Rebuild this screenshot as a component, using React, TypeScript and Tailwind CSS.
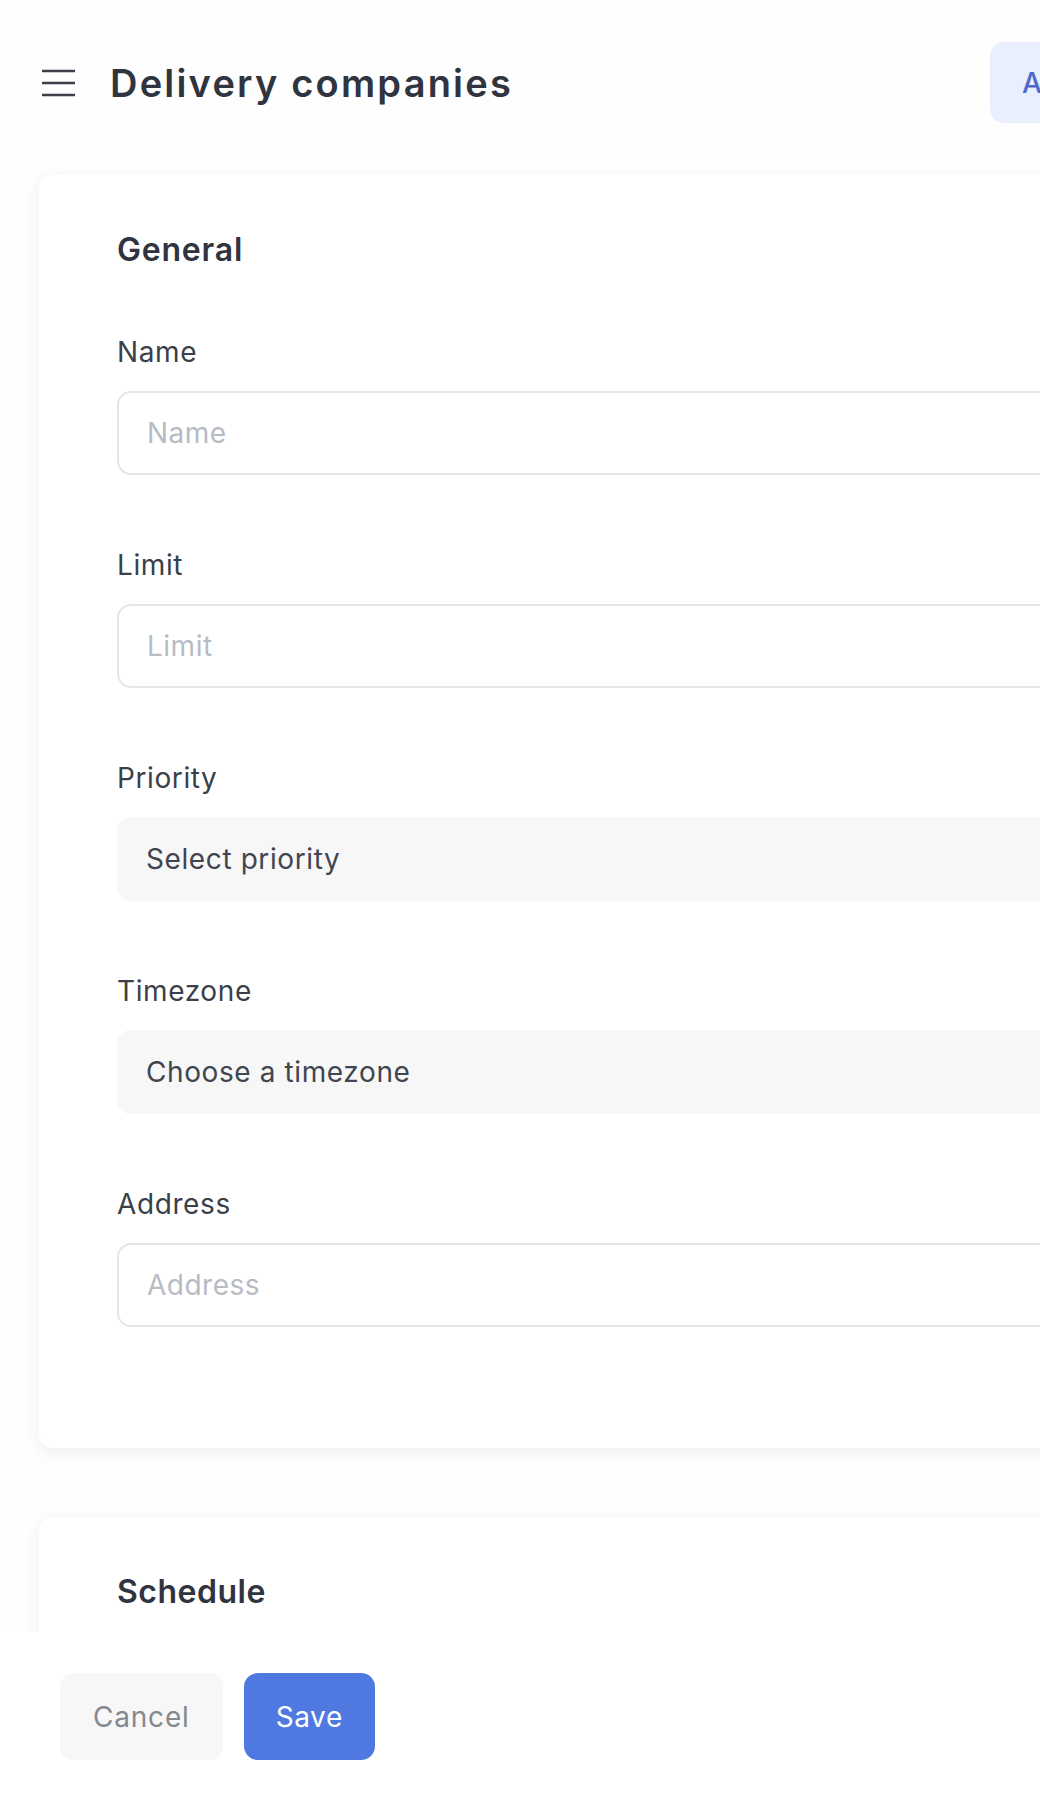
import React from 'react';

type FieldProps = {
  label: string;
  placeholder: string;
  kind?: 'input' | 'select';
};

function Field({ label, placeholder, kind = 'input' }: FieldProps) {
  return (
    <div className="flex flex-col gap-[19px]">
      <label className="text-[28px] leading-[40px] text-[#3a3f49] tracking-[0.6px]">{label}</label>
      {kind === 'input' ? (
        <input
          placeholder={placeholder}
          className="h-[84px] w-full rounded-[14px] border-2 border-[#e5e6e9] bg-white px-[28px] text-[28px] tracking-[0.5px] text-[#3a3f49] outline-none placeholder:text-[#b7bbc3]"
        />
      ) : (
        <div className="flex h-[84px] w-full items-center rounded-[14px] bg-[#f7f7f8] px-[29px] text-[28px] tracking-[0.6px] text-[#40454f]">
          {placeholder}
        </div>
      )}
    </div>
  );
}

export default function App() {
  return (
    <div className="flex h-[1800px] w-[1040px] flex-col overflow-hidden bg-[#fefefe] font-['Inter',sans-serif]">
      <div className="h-[1632px] w-[1300px] shrink-0 overflow-hidden">
        <header className="flex items-center pl-[42px] pr-[42px] pt-[42px]">
          <svg width="33" height="28" viewBox="0 0 33 28" className="shrink-0 text-[#3a3f49]">
            <path d="M0 2h33M0 14h33M0 26h33" stroke="currentColor" strokeWidth="2.6" />
          </svg>
          <h1 className="ml-[35px] text-[38px] font-semibold leading-[44px] tracking-[2.2px] text-[#2f3440]">
            Delivery companies
          </h1>
          <button
            type="button"
            className="ml-auto flex h-[81px] w-[268px] items-center rounded-[14px] bg-[#e9effc] pl-[32px] text-[28px] font-medium text-[#4d69c9]"
          >
            Add new
          </button>
        </header>

        <section className="ml-[39px] mr-[39px] mt-[52px] rounded-[14px] bg-white pb-[121px] pl-[78px] pr-[78px] pt-[55px] shadow-[0_4px_18px_rgba(0,0,0,0.07)]">
          <h2 className="text-[32px] font-semibold leading-[40px] tracking-[0.8px] text-[#2f3440]">General</h2>
          <div className="mt-[62px] flex flex-col gap-[70px]">
            <Field label="Name" placeholder="Name" />
            <Field label="Limit" placeholder="Limit" />
            <Field label="Priority" placeholder="Select priority" kind="select" />
            <Field label="Timezone" placeholder="Choose a timezone" kind="select" />
            <Field label="Address" placeholder="Address" />
          </div>
        </section>

        <section className="ml-[39px] mr-[39px] mt-[69px] h-[400px] rounded-[14px] bg-white pl-[78px] pt-[55px] shadow-[0_4px_18px_rgba(0,0,0,0.07)]">
          <h2 className="text-[32px] font-semibold leading-[40px] tracking-[0.5px] text-[#2f3440]">Schedule</h2>
        </section>
      </div>

      <footer className="flex h-[168px] shrink-0 items-start gap-[21px] bg-white pl-[60px] pt-[41px]">
        <button
          type="button"
          className="flex h-[87px] items-center rounded-[14px] bg-[#f7f7f8] px-[33px] text-[28px] tracking-[0.8px] text-[#84888f]"
        >
          Cancel
        </button>
        <button
          type="button"
          className="flex h-[87px] items-center rounded-[14px] bg-[#4f79e0] px-[32px] text-[28px] tracking-[0.6px] text-white"
        >
          Save
        </button>
      </footer>
    </div>
  );
}
